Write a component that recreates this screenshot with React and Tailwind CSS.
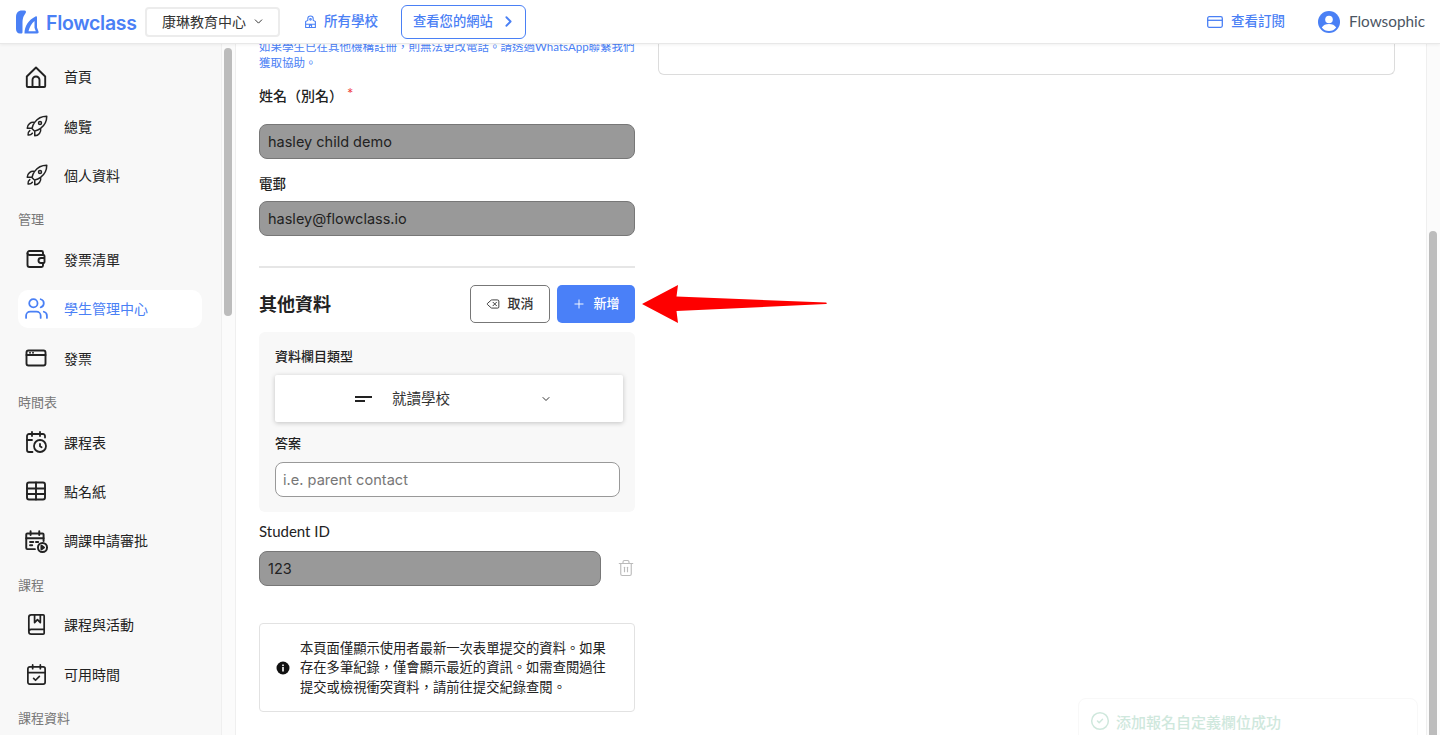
import React from "react";
import { ChevronDown, ChevronRight, Plus, Delete, Trash2, Users, CalendarCheck, BookMarked, CalendarClock, CircleCheck } from "lucide-react";
import { HiOutlineRocketLaunch } from "react-icons/hi2";

const CJK = "font-['Lato','Noto_Sans_CJK_TC',sans-serif]";

const S = ({ children, className = "w-[24px] h-[24px]" }) => (
  <svg viewBox="0 0 24 24" fill="none" stroke="currentColor" strokeWidth="1.9" strokeLinecap="round" strokeLinejoin="round" className={className}>
    {children}
  </svg>
);

const HomeIcon = () => (
  <S>
    <path d="M2.800 11.500 12 2.500l9.200 9V21a1 1 0 0 1-1 1H3.800a1 1 0 0 1-1-1z" />
    <path d="M8.500 22v-7a3.500 3.500 0 0 1 7 0v7" />
  </S>
);
const RocketIcon = () => <HiOutlineRocketLaunch className="w-[24px] h-[24px] ml-[2px]" />;
const WalletIcon = () => (
  <S>
    <path d="M19 8V5.500A1.500 1.500 0 0 0 17.500 4H5.500A2 2 0 0 0 3.500 6v12a2 2 0 0 0 2 2h12a1.500 1.500 0 0 0 1.500-1.500V16" />
    <path d="M3.500 6.500A2 2 0 0 0 5.500 8H19.500a1 1 0 0 1 1 1v6a1 1 0 0 1-1 1H17a2.500 2.500 0 0 1 0-5h3" />
  </S>
);
const BrowserIcon = () => (
  <S>
    <rect x="2.500" y="4.500" width="19" height="15" rx="2" />
    <path d="M2.500 9h19M6 6.800h.01M9 6.800h.01" />
  </S>
);
const GridIcon = () => (
  <S>
    <rect x="3" y="3.500" width="18" height="17" rx="2" />
    <path d="M3 9.500h18M3 15h18M12 3.500v17" />
  </S>
);
const CalPlayIcon = () => (
  <svg viewBox="0 0 24 24" fill="none" stroke="currentColor" strokeWidth="1.8" strokeLinecap="round" strokeLinejoin="round" className="w-[26px] h-[26px]">
    <path d="M11 19.500H4a1 1 0 0 1-1-1V6a1 1 0 0 1 1-1h14a1 1 0 0 1 1 1v6" />
    <path d="M7 3v3.500M15 3v3.500M3 9.500h16M6.500 13h3M6.500 16h2M12 13h2" />
    <circle cx="18" cy="18" r="4.200" />
    <path d="m17 16.300 2.400 1.700-2.400 1.700z" fill="currentColor" />
  </svg>
);

const nav = [
  { t: "首頁", I: HomeIcon },
  { t: "總覽", I: RocketIcon },
  { t: "個人資料", I: RocketIcon },
  { h: "管理" },
  { t: "發票清單", I: WalletIcon },
  { t: "學生管理中心", I: () => <Users className="w-[25px] h-[25px]" strokeWidth={1.7} />, active: true },
  { t: "發票", I: BrowserIcon },
  { h: "時間表" },
  { t: "課程表", I: () => <CalendarClock className="w-[24px] h-[24px]" strokeWidth={1.8} /> },
  { t: "點名紙", I: GridIcon },
  { t: "調課申請審批", I: CalPlayIcon },
  { h: "課程" },
  { t: "課程與活動", I: () => <BookMarked className="w-[23px] h-[23px]" strokeWidth={1.8} /> },
  { t: "可用時間", I: () => <CalendarCheck className="w-[23px] h-[23px]" strokeWidth={1.8} /> },
  { h: "課程資料" },
];

function Logo() {
  return (
    <svg viewBox="0 0 24 24" className="w-[24px] h-[24px] shrink-0" fill="#4a80f5">
      <path d="M1 7c0-4 2-6.500 6-6.500h2.500c1.500 0 2 1.500 1 2.800L8.800 6C8 7.500 7.500 10 7.500 13v9c0 1-.5 1.500-1.500 1.500H5C2.500 23.500 1 21.500 1 19z" />
      <path d="M9.500 23.500c0-7.500 4-13.500 11-17 .8-.4 1.500 0 1.500 1v10l1.500 4c.4 1-.2 2-1.300 2zm4-2.200h7.300l-1.300-3.500V11c-3 2.500-5 6-6 10.300z" fillRule="evenodd" />
    </svg>
  );
}

function Header() {
  return (
    <header className="relative z-10 h-[44px] shrink-0 flex items-center bg-white border-b border-[#e8e8e8] shadow-[0_1px_3px_rgba(0,0,0,0.06)]">
      <div className="ml-[15px] flex items-center w-[130px] gap-[7px]">
        <Logo />
        <span className="mt-[4px] font-['Inter',sans-serif] text-[19.500px] font-semibold tracking-[-0.3px] text-[#4a80f5]">Flowclass</span>
      </div>
      <div className="flex items-center h-[30px] w-[135px] pl-[15px] border-2 border-[#ececec] rounded-[4px] text-[14px] text-[#333]">
        康琳教育中心
        <ChevronDown className="w-[13px] h-[13px] ml-[6px]" strokeWidth={1.8} />
      </div>
      <div className="ml-[24px] flex items-center gap-[7px] text-[#4a80f5] text-[13.500px] font-medium">
        <svg viewBox="0 0 24 24" fill="none" stroke="currentColor" strokeWidth="2" strokeLinejoin="round" className="w-[13px] h-[14px]">
          <path d="M3 22V11l4-2V6a5 5 0 0 1 10 0v3l4 2v11z" />
          <circle cx="12" cy="7" r="1.500" />
          <path d="M3 16h18M10 22v-4h4v4" />
        </svg>
        所有學校
      </div>
      <div className="ml-[23px] flex items-center h-[34px] w-[125px] pl-[11px] border border-[#4a80f5] rounded-[6px] text-[#4a80f5] text-[13.300px] font-medium">
        查看您的網站
        <ChevronRight className="w-[17px] h-[17px] ml-[7px]" strokeWidth={2.6} />
      </div>
      <div className="ml-auto flex items-center gap-[8px] text-[#4a80f5] text-[13.500px] font-medium">
        <svg viewBox="0 0 16 14" fill="none" stroke="currentColor" strokeWidth="1.300" className="w-[16px] h-[14px]">
          <rect x="0.700" y="1.700" width="14.600" height="10.600" rx="1.500" />
          <path d="M0.700 5.300h14.600" />
        </svg>
        查看訂閱
      </div>
      <svg viewBox="0 0 22 22" className="ml-[33px] w-[22px] h-[22px]">
        <circle cx="11" cy="11" r="11" fill="#4a80f5" />
        <circle cx="11" cy="8.500" r="3.800" fill="#fff" />
        <path d="M3.800 16.500c1.500-2.500 4-3.500 7.200-3.500s5.700 1 7.200 3.500A9 9 0 0 1 11 20a9 9 0 0 1-7.200-3.500z" fill="#fff" />
      </svg>
      <span className="ml-[9px] mr-[15px] font-['Lato',sans-serif] text-[15.300px] text-[#4b5563]">Flowsophic</span>
    </header>
  );
}

function Sidebar() {
  return (
    <div className="flex shrink-0">
      <aside className="w-[221px] bg-[#f8f8f8] pt-[8px] overflow-hidden">
        {nav.map((n, i) =>
          n.h ? (
            <div key={i} className="h-[34.500px] pl-[18px] pt-[9px] text-[13px] leading-[20px] text-[#777]">{n.h}</div>
          ) : (
            <div key={i} className="h-[49.400px] flex items-center">
              <div className={`ml-[18px] w-[184px] h-[38px] flex items-center rounded-[10px] ${n.active ? "bg-white text-[#4a80f5]" : "text-[#222]"}`}>
                <span className="w-[46px] flex justify-center items-center -ml-[5px] mr-[5px]">
                  <n.I />
                </span>
                <span className="text-[14px]">{n.t}</span>
              </div>
            </div>
          )
        )}
      </aside>
      <div className="w-[15px] bg-[#fbfbfb] border-x border-[#efefef] pl-[2px] pt-[4px]">
        <div className="w-[8px] h-[268px] rounded-full bg-[#bcbcbc]" />
      </div>
    </div>
  );
}

const grayInput = "h-[35px] flex items-center px-[8px] pt-[1px] bg-[#999] border border-[#777] rounded-[8px] text-[14.500px] text-[#222] font-['Inter',sans-serif]";

function Form() {
  return (
    <div className="w-[376px] shrink-0 -mt-[5px]">
      <p className="text-[11.500px] leading-[16px] text-[#4a80f5]">如果學生已在其他機構註冊，則無法更改電話。請透過WhatsApp聯繫我們獲取協助。</p>
      <div className="mt-[14px] h-[20px] flex items-center text-[14px] font-medium text-[#222]">
        姓名（別名）
        <span className="ml-[4px] -mt-[3px] text-[#ef4444] text-[15px]">*</span>
      </div>
      <div className={`mt-[19px] ${grayInput}`}>hasley child demo</div>
      <div className="mt-[15px] h-[20px] flex items-center text-[13.500px] font-medium text-[#222]">電郵</div>
      <div className={`mt-[7px] ${grayInput}`}>hasley@flowclass.io</div>
      <div className="mt-[30px] h-[2px] bg-[#e6e6e6]" />
      <div className="mt-[17px] h-[38px] flex items-center">
        <span className="text-[18px] font-bold text-[#222]">其他資料</span>
        <div className="ml-auto w-[80px] h-[38px] flex items-center justify-center gap-[7px] border border-[#777] rounded-[5px] bg-white text-[13px] font-medium text-[#333]">
          <Delete className="w-[14px] h-[14px]" strokeWidth={1.6} />
          取消
        </div>
        <div className="ml-[7px] w-[78px] h-[38px] flex items-center justify-center gap-[7px] rounded-[5px] bg-[#4a80f8] text-[13px] font-medium text-white">
          <Plus className="w-[14px] h-[14px]" strokeWidth={1.6} />
          新增
        </div>
      </div>
      <div className="mt-[9px] h-[180px] bg-[#f8f8f8] rounded-[6px] px-[16px] pt-[15px]">
        <div className="h-[20px] flex items-center text-[13px] font-medium text-[#222]">資料欄目類型</div>
        <div className="relative mt-[8px] h-[47px] w-[348px] bg-white rounded-[2px] shadow-[0_1px_5px_rgba(0,0,0,0.22)] flex items-center text-[14.500px] text-[#333]">
          <svg viewBox="0 0 17 8" className="ml-[80px] w-[17px] h-[8px]">
            <rect x="0" y="1" width="17" height="2" fill="#222" />
            <rect x="0" y="5" width="10" height="2" fill="#222" />
          </svg>
          <span className="ml-[20px]">就讀學校</span>
          <ChevronDown className="ml-[90px] w-[12px] h-[12px]" strokeWidth={2} />
        </div>
        <div className="mt-[12px] h-[20px] flex items-center text-[13px] font-medium text-[#222]">答案</div>
        <div className="mt-[8px] h-[35px] w-[345px] flex items-center px-[7px] pt-[2px] bg-white border border-[#999] rounded-[8px] text-[14.600px] text-[#777] font-['Inter',sans-serif]">i.e. parent contact</div>
      </div>
      <div className="mt-[9px] h-[20px] flex items-center font-['Lato',sans-serif] text-[15px] text-[#222]">Student ID</div>
      <div className="mt-[10px] flex items-center">
        <div className={`w-[342px] ${grayInput}`}>123</div>
        <Trash2 className="ml-[16px] -mt-[1px] w-[18px] h-[18px] text-[#bbb]" strokeWidth={1.5} />
      </div>
      <div className="mt-[37px] h-[89px] flex items-center border border-[#e2e2e2] rounded-[4px] pl-[16px]">
        <svg viewBox="0 0 14 14" className="w-[14px] h-[14px] shrink-0">
          <circle cx="7" cy="7" r="6.500" fill="#111" />
          <rect x="6.200" y="6" width="1.600" height="4.500" fill="#fff" />
          <rect x="6.200" y="3.500" width="1.600" height="1.600" fill="#fff" />
        </svg>
        <p className="ml-[10px] pt-[1px] w-[310px] text-[13.300px] leading-[19.500px] text-[#222]">本頁面僅顯示使用者最新一次表單提交的資料。如果存在多筆紀錄，僅會顯示最近的資訊。如需查閱過往提交或檢視衝突資料，請前往提交紀錄查閱。</p>
      </div>
    </div>
  );
}

export default function App() {
  return (
    <div className={`relative h-[735px] w-[1440px] overflow-hidden flex flex-col bg-white ${CJK}`}>
      <Header />
      <div className="flex flex-1 min-h-0">
        <Sidebar />
        <main className="flex-1 min-w-0 overflow-hidden flex pl-[23px]">
          <Form />
          <div className="ml-[23px] w-[737px] h-[31px] border border-[#dcdcdc] border-t-0 rounded-b-[6px]" />
        </main>
        <div className="w-[14px] bg-[#fbfbfb] border-l border-[#efefef] pl-[2px] pt-[187px]">
          <div className="w-[8px] h-[504px] rounded-t-full bg-[#bcbcbc]" />
        </div>
      </div>
      <svg viewBox="0 0 190 42" className="absolute left-[640px] top-[283px] w-[190px] h-[42px]">
        <path d="M2 21 38 2l-1.500 11.500L186 19.500q2 .8 0 1.500L36.500 28 38 40z" fill="#fe0000" />
      </svg>
      <div className="absolute left-[1078px] top-[698px] w-[340px] h-[60px] rounded-[8px] bg-white border border-[#f8f8f8] flex items-start pt-[12px] pl-[11px] gap-[6px] text-[15px] font-medium text-[#cfe8dd]">
        <CircleCheck className="w-[20px] h-[20px]" strokeWidth={1.8} />
        添加報名自定義欄位成功
      </div>
    </div>
  );
}
